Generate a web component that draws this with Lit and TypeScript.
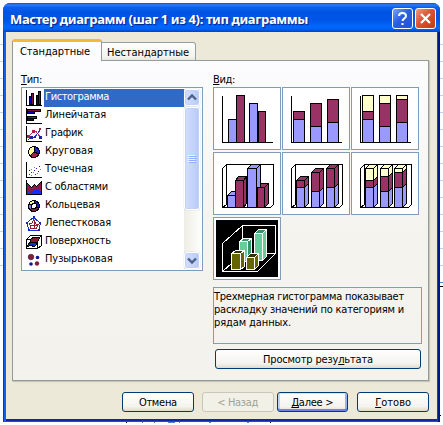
import { LitElement, html, svg, css } from "lit";
import { customElement, property } from "lit/decorators.js";

const BLUE = "#9999ff";
const PLUM = "#993366";
const CREAM = "#ffffcc";

/** A run of text spread evenly over a given width; `key` is the underlined mnemonic index. */
@customElement("fit-text")
class FitText extends LitElement {
  @property() text = "";
  @property({ type: Number }) width = 0;
  @property({ type: Number }) key = -1;
  static styles = css`
    :host { display: inline-block; white-space: pre; }
    .u { text-decoration: underline; text-underline-offset: 1px; text-decoration-thickness: 1px; text-decoration-skip-ink: none; }
  `;
  firstUpdated() {
    const natural = this.getBoundingClientRect().width;
    if (this.width) this.style.letterSpacing = `${(this.width - natural) / this.text.length}px`;
  }
  render() {
    const k = this.key;
    return k < 0
      ? html`<span>${this.text}</span>`
      : html`<span>${this.text.slice(0, k)}<span class="u">${this.text[k]}</span>${this.text.slice(k + 1)}</span>`;
  }
}

const t = (text: string, width: number, key = -1) =>
  html`<fit-text .text=${text} .width=${width} .key=${key}></fit-text>`;

const box = (x: number, y: number, x2: number, y2: number, fill: string, line = "#000") =>
  svg`<rect x=${x + 0.5} y=${y + 0.5} width=${x2 - x} height=${y2 - y} fill=${fill} stroke=${line}/>`;

/** Flat stacked column: levels run from top to bottom. */
const stack = (x: number, w: number, levels: number[], fills: string[]) =>
  fills.map((f, i) => box(x, levels[i], x + w, levels[i + 1], f));

/** Column with depth: levels run from top to bottom. */
const prism = (x: number, w: number, levels: number[], fills: string[], dx = 4, dy = 4, line = "#000", cap = fills[0], sides = fills) => svg`
  <path transform="translate(.5 .5)" d="M${x} ${levels[0]}l${dx} ${-dy}h${w}l${-dx} ${dy}z" fill=${cap} stroke=${line}/>
  ${fills.map((f, i) => svg`
    <path transform="translate(.5 .5)" d="M${x + w} ${levels[i]}l${dx} ${-dy}V${levels[i + 1] - dy}l${-dx} ${dy}z" fill=${sides[i]} stroke=${line}/>
    ${box(x, levels[i], x + w, levels[i + 1], f, line)}`)}`;

const axes = svg`<path d="M9.5 9V55.5H60" fill="none" stroke="#000"/>`;
const room = svg`<path d="M13.5 52.5V12.5H60.5V52.5L57.5 55.5H9.5V16.5L13.5 12.5M9.5 55.5L13.5 52.5" fill="none" stroke="#000"/>`;

const kinds = [
  svg`${axes}${box(15, 32, 23, 55, BLUE)}${box(23, 8, 31, 55, PLUM)}${box(36, 16, 44, 55, BLUE)}${box(45, 24, 52, 55, PLUM)}`,
  svg`${axes}${stack(11, 11, [24, 32, 55], [PLUM, BLUE])}${stack(28, 11, [16, 39, 55], [PLUM, BLUE])}${stack(45, 11, [12, 35, 55], [PLUM, BLUE])}`,
  svg`${axes}${stack(11, 11, [8, 24, 32, 55], [CREAM, PLUM, BLUE])}${stack(28, 11, [8, 16, 39, 55], [CREAM, PLUM, BLUE])}${stack(45, 11, [8, 12, 35, 55], [CREAM, PLUM, BLUE])}`,
  svg`${room}${prism(14, 8, [43, 55], [BLUE])}${prism(22, 8, [28, 55], [PLUM], 3)}${prism(44, 7, [35, 55], [PLUM])}${prism(34, 9, [16, 55], [BLUE])}${box(44, 35, 51, 55, PLUM)}`,
  svg`${room}${prism(14, 8, [28, 35, 55], [PLUM, BLUE])}${prism(29, 8, [20, 39, 55], [PLUM, BLUE])}${prism(44, 8, [16, 35, 55], [PLUM, BLUE])}`,
  svg`${room}${prism(14, 8, [16, 28, 35, 55], [CREAM, PLUM, BLUE])}${prism(29, 8, [16, 24, 39, 55], [CREAM, PLUM, BLUE])}${prism(43, 8, [16, 20, 35, 55], [CREAM, PLUM, BLUE])}`,
  svg`<rect x="3" y="3" width="62" height="57" fill="#000"/>
    <path transform="translate(.5 .5)" d="M9 26V54H44L62 36V8H29L9 26M29 8V36H62M29 36L9 54" fill="none" stroke="#fff"/>
    ${prism(26, 8, [24, 44], ["#66cc99"], 4, 3, "#fff", "#339966", ["#339966"])}
    ${prism(41, 8, [16, 43], ["#66cc99"], 4, 4, "#fff", "#339966", ["#66cc99"])}
    ${prism(18, 9, [36, 52], ["#666600"], 4, 3, "#fff", "#333300", ["#666600"])}
    ${prism(33, 8, [40, 52], ["#666600"], 4, 4, "#fff", "#333300", ["#666600"])}`,
];

const NAVY = "#0000c0";
const MAROON = "#801040";
const frame = svg`<path d="M.5 0V15.5H16" fill="none" stroke="#000"/>`;
const types: [string, number, unknown][] = [
  ["Гистограмма", 64, svg`${frame}${box(3, 6, 5, 14, NAVY)}${box(5, 3, 7, 14, MAROON)}${box(10, 5, 12, 14, NAVY)}${box(12, 1, 14, 14, MAROON)}`],
  ["Линейчатая", 61, svg`${frame}${box(1, 1, 14, 3, MAROON)}${box(1, 3, 8, 5, NAVY)}${box(1, 8, 10, 10, MAROON)}${box(1, 10, 7, 12, NAVY)}`],
  ["График", 38, svg`${frame}<path d="M2.5 10.5L7.5 5.5H10L14.5 11.5" fill="none" stroke="#c03040"/><path d="M2.5 13.5L5.5 11.5H8.5L14.5 3.5" fill="none" stroke="#3030d0"/>
    <path d="M1 9h3v3h-3zM6 4h3v3h-3zM13 2h2v2h-2z" fill="#b02040"/><path d="M4 10h3v3h-3zM8 10h2v2h-2zM13 10h3v3h-3z" fill="#2020b0"/>`],
  ["Круговая", 48, svg`<circle cx="8" cy="8" r="5.5" fill="#ffff99" stroke="#000"/><path d="M8 8V2.5A5.5 5.5 0 0 1 13 10Z" fill="#2020c0" stroke="#000"/><path d="M8 8L13 10A5.5 5.5 0 0 1 4 12Z" fill="#a02050" stroke="#000"/>`],
  ["Точечная", 48, svg`${frame}<path d="M3 12h1v1h-1zM5 10h1v1h-1zM8 8h1v1h-1zM10 6h1v1h-1zM13 4h1v1h-1zM9 12h1v1h-1zM3 8h1v1h-1zM12 9h1v1h-1z" fill="#2020b0"/><path d="M5 13h1v1h-1zM7 10h1v1h-1zM11 11h1v1h-1zM5 7h1v1h-1zM14 7h1v1h-1zM8 5h1v1h-1z" fill="#8080a0"/>`],
  ["С областями", 63, svg`<path d="M.5 2.5L5.5 7.5L8.5 4.5L10.5 6.5L15.5 1.5V13.5H.5Z" fill="#901848" stroke="#000"/><path d="M1 10L5 13L9 9L11 9L15 13V14.5H1Z" fill="#1030ff"/><path d="M.5 0V14.5H16" fill="none" stroke="#000"/>`],
  ["Кольцевая", 55, svg`<circle cx="8" cy="8" r="5.5" fill="#ffff80" stroke="#000"/><path d="M8 8V2.5A5.5 5.5 0 0 1 13 10Z" fill="#2020b0" stroke="#000"/><path d="M8 8L13 10A5.5 5.5 0 0 1 4 12Z" fill="#802040" stroke="#000"/><path d="M4 12A5.5 5.5 0 0 1 3 6L8 8Z" fill="#8080ff" stroke="#000"/><circle cx="8" cy="8" r="2.5" fill="#fff" stroke="#000"/>`],
  ["Лепестковая", 66, svg`<path d="M7.5 1.5L14.5 7L12.5 14.5H3.5L.5 7Z" fill="none" stroke="#2030e0"/><path d="M7.5 3.5L10 8L12.5 8.5L10 12.5H5L3.5 7.5L6 7ZM8 5V12M5 9H11" fill="none" stroke="#902030"/><path d="M7 0h2v2h-2zM0 6h2v2h-2zM13 6h2v2h-2zM2 13h2v2h-2zM12 13h2v2h-2z" fill="#1020c0"/>`],
  ["Поверхность", 66, svg`<path d="M4.5 1.5H15.5V11.5L11.5 14.5H.5V5.5ZM15.5 1.5L11.5 5.5V14.5M.5 5.5H11.5" fill="#fff" stroke="#000"/><path d="M5 5L8 3H14L11 9H4Z" fill="#802030" stroke="#000"/><path d="M1 13L4 8H10L11 10L8 13L5 11Z" fill="#1030e0" stroke="#000"/>`],
  ["Пузырьковая", 67.5, svg`<g shape-rendering="auto"><circle cx="5" cy="5" r="2.8" fill="#802040" stroke="#401030" stroke-width=".6"/><circle cx="11.5" cy="5.5" r="1.8" fill="#1010b0"/><circle cx="5" cy="12" r="1.8" fill="#1010a0"/><circle cx="11" cy="11.5" r="2.2" fill="#802040"/></g>`],
];

@customElement("app-root")
class AppRoot extends LitElement {
  static styles = css`
    * { box-sizing: border-box; }
    :host { display: block; box-sizing: border-box; width: 443px; height: 425px; overflow: hidden; background: #fdfeff; padding: 3px;
      font: 11px/13px "DejaVu Sans Condensed", "DejaVu Sans", sans-serif; color: #000; position: relative; }
    svg { display: block; shape-rendering: crispEdges; }
    .sheet { position: absolute; inset: 0; width: 443px; height: 425px; }
    .window { position: relative; width: 437px; height: 419px; border-radius: 7px 7px 0 0; display: flex; flex-direction: column;
      background: linear-gradient(90deg, #0831d9 0 1px, #1260ee 1px 3px, #0855dd 3px calc(100% - 3px), #0645d0 calc(100% - 3px) calc(100% - 2px), #001590 calc(100% - 2px)); overflow: hidden; }
    .title { height: 29px; flex: none; display: flex; align-items: center; padding: 2px 4px 0 7px; gap: 2px; color: #fff;
      background: linear-gradient(#0a4cd0 0, #2f80f4 2px, #0c62ec 4px, #0054e3 9px, #0055e6 17px, #0066fb 23px, #0063f5 26px, #0040c8 29px); }
    .title fit-text { font: bold 13px/18px "Noto Sans", sans-serif; text-shadow: 1px 1px 1px #0a1f80; margin: 1px auto 0 0; }
    .tb { width: 21px; height: 21px; border: 1px solid #fff; border-radius: 3px; background: linear-gradient(135deg, #7fa4f4, #2a5fe0 45%, #2251d5); }
    .tb.close { background: linear-gradient(135deg, #eb9a80, #dc5334 45%, #bf3b14); }
    .tb svg { shape-rendering: auto; }
    .body { flex: 1; margin: 0 3px 3px; background: #ece9d8; padding: 7px 8px 0 6px; display: flex; flex-direction: column; box-shadow: 0 2px #0528b5; }
    .tabs { display: flex; align-items: flex-end; height: 22px; position: relative; z-index: 1; margin-bottom: -1px; }
    .tab { height: 19px; width: 94px; border: 1px solid #91a0a5; border-left: 0; border-radius: 0 3px 0 0; background: linear-gradient(#fff, #f4f3ee 80%, #e9e7dc); padding: 3px 0 0 5px; white-space: nowrap; }
    .tab.on { width: 90px; height: 22px; border: 1px solid #919b9c; border-bottom: 0; border-top: 3px solid #f7b73c; border-radius: 3px 3px 0 0; background: #fcfcfe; padding: 3px 0 0 7px; }
    .page { height: 321px; border: 1px solid #919b9c; background: linear-gradient(#fcfcfe, #f4f3ee 55%, #f3f2ec); box-shadow: 1px 1px 1px #c9c6b8; padding: 12px 0 0 8px; display: flex; gap: 10px; flex: none; }
    .cap { height: 14px; line-height: 14px; }
    .list { width: 182px; height: 184px; border: 1px solid #7f9db9; background: #fff; display: flex; justify-content: space-between; padding: 1px; }
    .rows { width: 163px; padding-left: 2px; }
    .row { display: flex; height: 18px; align-items: flex-start; }
    .row svg { margin: 1px 2px 0 1px; flex: none; }
    .row .lab { flex: 1; height: 18px; padding: 1px 0 0 1px; }
    .row.sel .lab { background: #316ac5; color: #fff; }
    .bar { width: 17px; display: flex; flex-direction: column; justify-content: space-between; background: linear-gradient(90deg, #eeede5, #fefefb); }
    .btns { display: flex; flex-direction: column; gap: 1px; }
    .sb { width: 16px; height: 17px; border: 1px solid #fff; border-radius: 3px; background: linear-gradient(90deg, #d2defd, #c0d1fb 70%, #b3c6f2); box-shadow: inset 0 0 0 1px #c3d1f6, 0 0 1px #7f9fd0; }
    .sb.thumb { height: 103px; display: flex; align-items: center; justify-content: center; }
    .grid { display: grid; grid-template-columns: repeat(3, 68px); grid-auto-rows: 63px; gap: 2px 1px; }
    .cell { background: #fff; box-shadow: inset 0 0 0 1px #7f9db9; }
    .right { width: 210px; display: flex; flex-direction: column; }
    .desc { margin-top: 7px; width: 209px; height: 57px; border: 1px solid #7f9db9; padding: 2px 0 0 0; display: flex; flex-direction: column; align-items: flex-start; }
    .btn { height: 20px; border: 1px solid #003c74; border-radius: 3px; background: linear-gradient(#fff, #f4f3ee 75%, #dedacd); display: flex; align-items: center; justify-content: center; }
    .view { width: 206px; margin: 5px 0 0 2px; }
    .foot { display: flex; margin: 11px 0 0 110px; }
    .foot .btn { width: 72px; margin-right: 8px; }
    .foot .btn.off { border-color: #c9c7ba; color: #a1a192; background: #f2f1e8; margin-right: 3px; }
    .foot .btn.def { box-shadow: inset 0 1px #cee7ff, inset 0 -2px #6982ee, inset 2px 0 #bcd4f6, inset -2px 0 #98b4f0; margin-right: 9px; }
    .foot .btn:last-child { margin-right: 0; }
  `;

  render() {
    return html`
      <svg class="sheet" viewBox="0 0 443 425">
        ${[44, 61, 78, 95, 112, 129, 146, 163, 180, 197, 214, 231, 248, 265].map((y) => svg`<path d="M440 ${y + 0.5}H443M0 ${y + 0.5}H3" stroke="#c4d2e8"/>`)}
        <path d="M440 286.5H443M440 415.5H441M126 422.5H127M270 422.5H271" stroke="#000"/>
        <path d="M440 282.5H443M142 422.5H143M154 422.5H155M168 422.5H175M179 422.5H180M209 422.5H211M247 422.5H249" stroke="#5a7fc0"/>
      </svg>
      <div class="window">
        <div class="title">
          ${t("Мастер диаграмм (шаг 1 из 4): тип диаграммы", 298)}
          <div class="tb"><svg width="19" height="19"><path d="M6 7C6 3 13 3 13 7C13 9.500 9.500 9.500 9.500 12M9.500 14V16" fill="none" stroke="#fff" stroke-width="2"/></svg></div>
          <div class="tb close"><svg width="19" height="19"><path d="M5 5L14 14M14 5L5 14" stroke="#fff" stroke-width="2.200"/></svg></div>
        </div>
        <div class="body">
          <div class="tabs">
            <div class="tab on">${t("Стандартные", 70)}</div>
            <div class="tab">${t("Нестандартные", 82)}</div>
          </div>
          <div class="page">
            <div>
              <div class="cap">${t("Тип:", 21, 0)}</div>
              <div class="list">
                <div class="rows">
                  ${types.map(([name, w, icon], i) => html`<div class="row ${i ? "" : "sel"}"><svg width="16" height="16">${icon}</svg><div class="lab">${t(name, w)}</div></div>`)}
                </div>
                <div class="bar">
                  <div class="btns">
                    <div class="sb"><svg width="14" height="15"><path d="M3 9.500L7 5.500L11 9.500" fill="none" stroke="#4d6185" stroke-width="2.400" shape-rendering="auto"/></svg></div>
                    <div class="sb thumb"><svg width="8" height="8"><path d="M0 .5H7M0 2.500H7M0 4.500H7M0 6.500H7" stroke="#eef4fe"/><path d="M1 1.500H8M1 3.500H8M1 5.500H8M1 7.500H8" stroke="#8cb0f8"/></svg></div>
                  </div>
                  <div class="sb"><svg width="14" height="15"><path d="M3 5.500L7 9.500L11 5.500" fill="none" stroke="#4d6185" stroke-width="2.400" shape-rendering="auto"/></svg></div>
                </div>
              </div>
            </div>
            <div class="right">
              <div class="cap">${t("Вид:", 22, 0)}</div>
              <div class="grid">${kinds.map((k) => html`<div class="cell"><svg width="68" height="63">${k}</svg></div>`)}</div>
              <div class="desc">
                ${t("Трехмерная гистограмма показывает", 190)}
                ${t("раскладку значений по категориям и", 190)}
                ${t("рядам данных.", 77)}
              </div>
              <div class="btn view">${t("Просмотр результата", 110, 13)}</div>
            </div>
          </div>
          <div class="foot">
            <div class="btn">${t("Отмена", 38)}</div>
            <div class="btn off">${t("< Назад", 41)}</div>
            <div class="btn def">${t("Далее >", 42, 0)}</div>
            <div class="btn">${t("Готово", 36, 0)}</div>
          </div>
        </div>
      </div>`;
  }
}
